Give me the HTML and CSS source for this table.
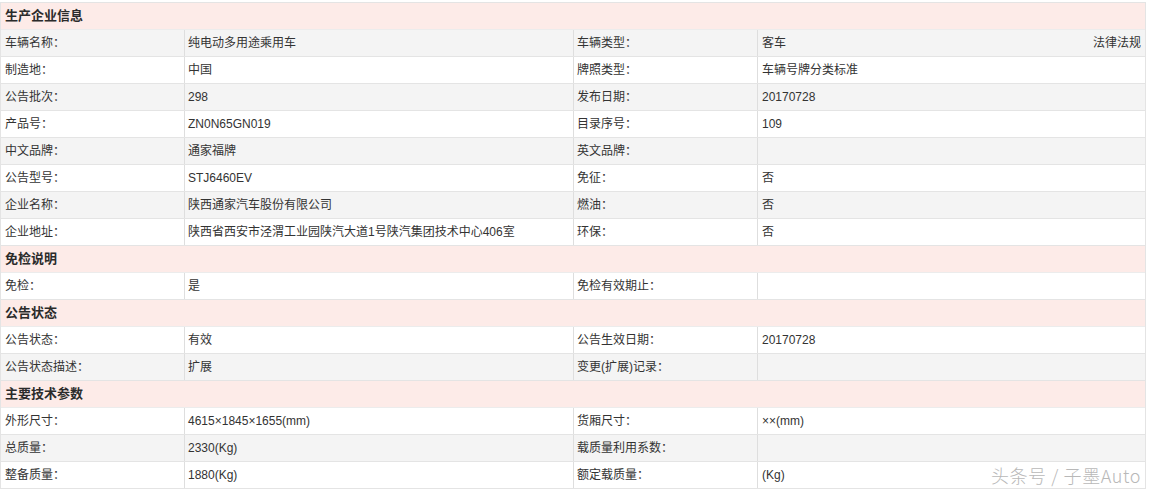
FILE: index.html
```html
<!DOCTYPE html>
<html lang="zh-CN">
<head>
<meta charset="utf-8">
<title>车辆公告信息</title>
<link rel="stylesheet" href="styles.css">
</head>
<body>
<div class="sheet">
  <div class="sec">生产企业信息</div>
  <div class="row alt"><div class="c c1">车辆名称：</div><div class="c c2">纯电动多用途乘用车</div><div class="c c3">车辆类型：</div><div class="c c4 split"><span>客车</span><span>法律法规</span></div></div>
  <div class="row"><div class="c c1">制造地：</div><div class="c c2">中国</div><div class="c c3">牌照类型：</div><div class="c c4">车辆号牌分类标准</div></div>
  <div class="row alt"><div class="c c1">公告批次：</div><div class="c c2">298</div><div class="c c3">发布日期：</div><div class="c c4">20170728</div></div>
  <div class="row"><div class="c c1">产品号：</div><div class="c c2">ZN0N65GN019</div><div class="c c3">目录序号：</div><div class="c c4">109</div></div>
  <div class="row alt"><div class="c c1">中文品牌：</div><div class="c c2">通家福牌</div><div class="c c3">英文品牌：</div><div class="c c4"></div></div>
  <div class="row"><div class="c c1">公告型号：</div><div class="c c2">STJ6460EV</div><div class="c c3">免征：</div><div class="c c4">否</div></div>
  <div class="row alt"><div class="c c1">企业名称：</div><div class="c c2">陕西通家汽车股份有限公司</div><div class="c c3">燃油：</div><div class="c c4">否</div></div>
  <div class="row"><div class="c c1">企业地址：</div><div class="c c2">陕西省西安市泾渭工业园陕汽大道1号陕汽集团技术中心406室</div><div class="c c3">环保：</div><div class="c c4">否</div></div>
  <div class="sec">免检说明</div>
  <div class="row"><div class="c c1">免检：</div><div class="c c2">是</div><div class="c c3">免检有效期止：</div><div class="c c4"></div></div>
  <div class="sec">公告状态</div>
  <div class="row"><div class="c c1">公告状态：</div><div class="c c2">有效</div><div class="c c3">公告生效日期：</div><div class="c c4">20170728</div></div>
  <div class="row alt"><div class="c c1">公告状态描述：</div><div class="c c2">扩展</div><div class="c c3">变更(扩展)记录：</div><div class="c c4"></div></div>
  <div class="sec">主要技术参数</div>
  <div class="row"><div class="c c1">外形尺寸：</div><div class="c c2">4615×1845×1655(mm)</div><div class="c c3">货厢尺寸：</div><div class="c c4">××(mm)</div></div>
  <div class="row alt"><div class="c c1">总质量：</div><div class="c c2">2330(Kg)</div><div class="c c3">载质量利用系数：</div><div class="c c4"></div></div>
  <div class="row"><div class="c c1">整备质量：</div><div class="c c2">1880(Kg)</div><div class="c c3">额定载质量：</div><div class="c c4">(Kg)</div></div>
</div>
<div class="mark">头条号 / 子墨Auto</div>
</body>
</html>
```

FILE: styles.css
```css
html, body {
  margin: 0;
  padding: 0;
  background: #fff;
}
body {
  font-family: "Liberation Sans", "Noto Sans CJK SC", sans-serif;
  font-size: 12px;
  color: #333;
  position: relative;
  height: 491px;
  overflow: hidden;
}
.sheet {
  width: 1146px;
  box-sizing: border-box;
  margin-top: 2px;
  border: 1px solid #e4e4e4;
  border-bottom: none;
}
.sec {
  height: 26px;
  line-height: 26px;
  padding-left: 4px;
  background: #fdebe8;
  border-bottom: 1px solid #ececec;
  font-size: 13px;
  font-weight: bold;
  color: #2b2b2b;
}
.row {
  display: grid;
  grid-template-columns: 183px 389px 184px 387px;
  height: 26px;
  border-bottom: 1px solid #e4e4e4;
  background: #fff;
}
.row.alt {
  background: #f4f4f4;
}
.c {
  line-height: 26px;
  white-space: nowrap;
  overflow: hidden;
}
.c1 {
  padding-left: 4px;
}
.c2, .c3 {
  border-left: 1px solid #dedede;
  padding-left: 3px;
}
.c4 {
  border-left: 1px solid #dedede;
  padding-left: 4px;
  padding-right: 3px;
}
.split {
  display: flex;
  justify-content: space-between;
}
.mark {
  position: absolute;
  right: 10px;
  top: 463px;
  font-size: 18px;
  line-height: 24px;
  letter-spacing: 0.6px;
  font-weight: 300;
  color: #b8b8b8;
  text-shadow: 1px 1px 0 #fff, -1px -1px 0 #fff;
  font-family: "Noto Sans CJK SC", "Liberation Sans", sans-serif;
}
```
